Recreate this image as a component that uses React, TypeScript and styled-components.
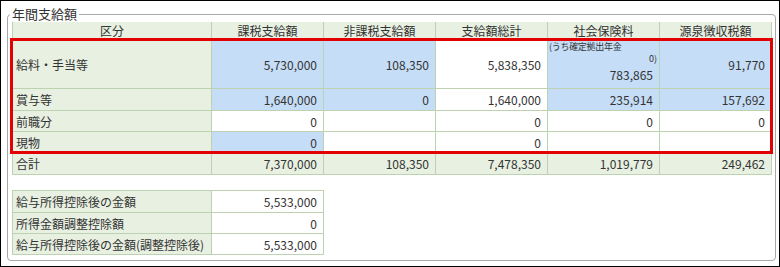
import React from "react";
import styled, { createGlobalStyle } from "styled-components";

type Tone = "green" | "blue" | "white";

interface CellData {
  text?: string;
  tone: Tone;
}

interface RowData {
  label: string;
  cells: CellData[];
}

const GlobalStyle = createGlobalStyle`
  html, body {
    margin: 0;
    padding: 0;
    background: #ffffff;
  }
  body {
    font-family: "Noto Sans CJK JP", "Noto Sans", sans-serif;
    color: #333333;
  }
`;

const tones: Record<Tone, string> = {
  green: "#e7f0e1",
  blue: "#c5ddf6",
  white: "#ffffff",
};

const LINE = "#bcd2b0";

const headers = ["区分", "課税支給額", "非課税支給額", "支給額総計", "社会保険料", "源泉徴収税額"];

const bodyRows: RowData[] = [
  {
    label: "賞与等",
    cells: [
      { text: "1,640,000", tone: "blue" },
      { text: "0", tone: "blue" },
      { text: "1,640,000", tone: "white" },
      { text: "235,914", tone: "blue" },
      { text: "157,692", tone: "blue" },
    ],
  },
  {
    label: "前職分",
    cells: [
      { text: "0", tone: "white" },
      { text: "", tone: "white" },
      { text: "0", tone: "white" },
      { text: "0", tone: "white" },
      { text: "0", tone: "white" },
    ],
  },
  {
    label: "現物",
    cells: [
      { text: "0", tone: "blue" },
      { text: "", tone: "white" },
      { text: "0", tone: "white" },
      { text: "", tone: "white" },
      { text: "", tone: "white" },
    ],
  },
];

const totals = ["7,370,000", "108,350", "7,478,350", "1,019,779", "249,462"];

const deductions = [
  { label: "給与所得控除後の金額", value: "5,533,000" },
  { label: "所得金額調整控除額", value: "0" },
  { label: "給与所得控除後の金額(調整控除後)", value: "5,533,000" },
];

const App: React.FC = () => {
  return (
    <Frame>
      <GlobalStyle />
      <Panel>
        <Legend>年間支給額</Legend>
        <Grid>
          <Row $h={18}>
            {headers.map((h) => (
              <HeadCell key={h}>{h}</HeadCell>
            ))}
          </Row>
          <Highlight>
            <Row $h={49}>
              <LabelCell>給料・手当等</LabelCell>
              <NumCell $tone="blue">5,730,000</NumCell>
              <NumCell $tone="blue">108,350</NumCell>
              <NumCell $tone="white">5,838,350</NumCell>
              <StackCell $tone="blue">
                <Note>(うち確定拠出年金</Note>
                <NoteValue>0)</NoteValue>
                <StackValue>783,865</StackValue>
              </StackCell>
              <NumCell $tone="blue">91,770</NumCell>
            </Row>
            {bodyRows.map((row, i) => (
              <Row $h={i === 0 ? 22 : 21} key={row.label}>
                <LabelCell>{row.label}</LabelCell>
                {row.cells.map((c, j) => (
                  <NumCell $tone={c.tone} key={j}>
                    {c.text}
                  </NumCell>
                ))}
              </Row>
            ))}
          </Highlight>
          <Row $h={22}>
            <LabelCell>合計</LabelCell>
            {totals.map((t) => (
              <NumCell $tone="green" key={t}>
                {t}
              </NumCell>
            ))}
          </Row>
        </Grid>
        <SubGrid>
          {deductions.map((d, i) => (
            <SubRow $h={i === 0 ? 22 : 21} key={d.label}>
              <LabelCell>{d.label}</LabelCell>
              <NumCell $tone="white">{d.value}</NumCell>
            </SubRow>
          ))}
        </SubGrid>
      </Panel>
    </Frame>
  );
};

const Frame = styled.div`
  width: 780px;
  height: 267px;
  box-sizing: border-box;
  border: 1px solid #000000;
  padding: 4px 3px 5px 6px;
`;

const Panel = styled.fieldset`
  margin: 0;
  height: 100%;
  box-sizing: border-box;
  border: 1px solid #a8a8a8;
  border-radius: 4px;
  padding: 0 3px 5px 4px;
`;

const Legend = styled.legend`
  font-size: 13px;
  line-height: 18px;
  padding: 0 2px;
  margin-left: -2px;
  color: #333333;
`;

const Grid = styled.div`
  display: flex;
  flex-direction: column;
  width: 760px;
  margin-top: -1px;
  border-left: 1px solid ${LINE};
  box-sizing: border-box;
`;

const Row = styled.div<{ $h: number }>`
  display: grid;
  grid-template-columns: 199px repeat(5, 112px);
  height: ${(p) => p.$h}px;
`;

const Highlight = styled.div`
  position: relative;
  &::after {
    content: "";
    position: absolute;
    inset: -2px -1px -1px -3px;
    border: 3px solid #e30000;
    pointer-events: none;
  }
`;

const BaseCell = styled.div<{ $tone?: Tone }>`
  box-sizing: border-box;
  border-right: 1px solid ${LINE};
  border-bottom: 1px solid ${LINE};
  background: ${(p) => tones[p.$tone || "green"]};
  font-size: 12px;
  display: flex;
  align-items: center;
  white-space: nowrap;
  overflow: hidden;
`;

const HeadCell = styled(BaseCell)`
  justify-content: center;
  background: ${tones.green};
  line-height: 16px;
`;

const LabelCell = styled(BaseCell)`
  padding-left: 3px;
  background: ${tones.green};
`;

const NumCell = styled(BaseCell)`
  justify-content: flex-end;
  padding-right: 6px;
`;

const StackCell = styled(BaseCell)`
  flex-direction: column;
  align-items: stretch;
  justify-content: flex-start;
  padding: 1px 2px 0 1px;
`;

const Note = styled.div`
  font-size: 9px;
  line-height: 12px;
  letter-spacing: -0.3px;
  text-align: left;
`;

const NoteValue = styled.div`
  font-size: 9px;
  line-height: 12px;
  text-align: right;
`;

const StackValue = styled.div`
  font-size: 12px;
  line-height: 20px;
  text-align: right;
  padding-right: 4px;
`;

const SubGrid = styled.div`
  margin-top: 15px;
  width: 312px;
  border-top: 1px solid ${LINE};
  border-left: 1px solid ${LINE};
  box-sizing: border-box;
`;

const SubRow = styled.div<{ $h: number }>`
  display: grid;
  grid-template-columns: 199px 112px;
  height: ${(p) => p.$h}px;
`;

export default App;
